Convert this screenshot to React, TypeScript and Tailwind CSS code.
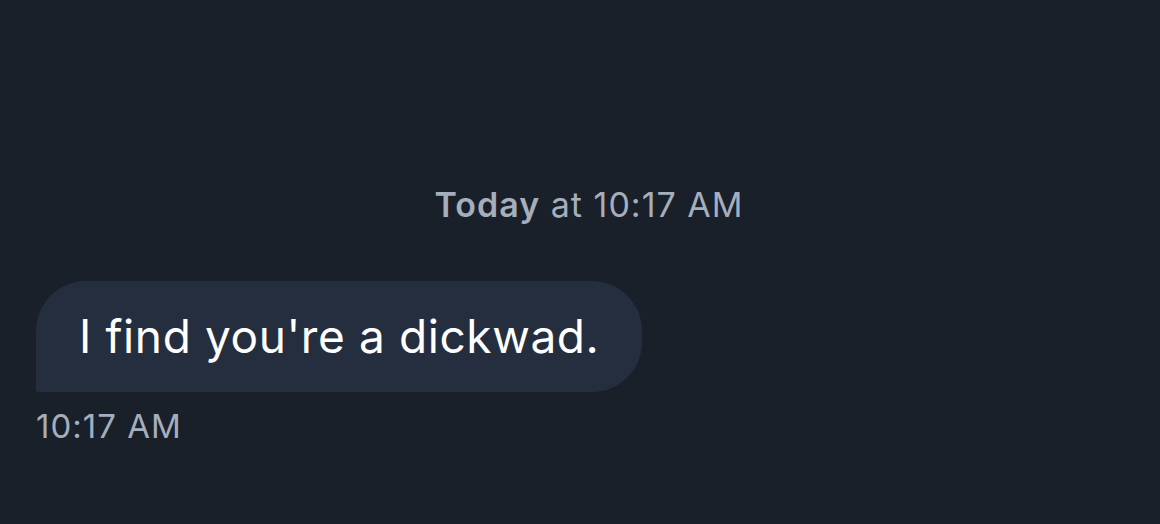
export default function App() {
  return (
    <div
      className="w-[1160px] h-[524px] bg-[#19202a] pl-[36px] pr-[18px] pt-[180px] overflow-hidden"
      style={{ fontFamily: 'Inter, "Noto Sans", sans-serif' }}
    >
      <div className="text-center text-[34px] leading-[50px] tracking-[1px] text-[#a5aebd]">
        <span className="font-semibold">Today</span> at 10:17 AM
      </div>
      <div className="mt-[51px] flex flex-col items-start">
        <div className="bg-[#252e3e] rounded-[50px] rounded-bl-[3px] h-[111px] px-[43px] flex items-center">
          <span className="text-[46px] text-white tracking-[0.6px]">I find you're a dickwad.</span>
        </div>
        <div className="mt-[14px] text-[33px] leading-[40px] tracking-[1px] text-[#a5aebd]">10:17 AM</div>
      </div>
    </div>
  );
}
